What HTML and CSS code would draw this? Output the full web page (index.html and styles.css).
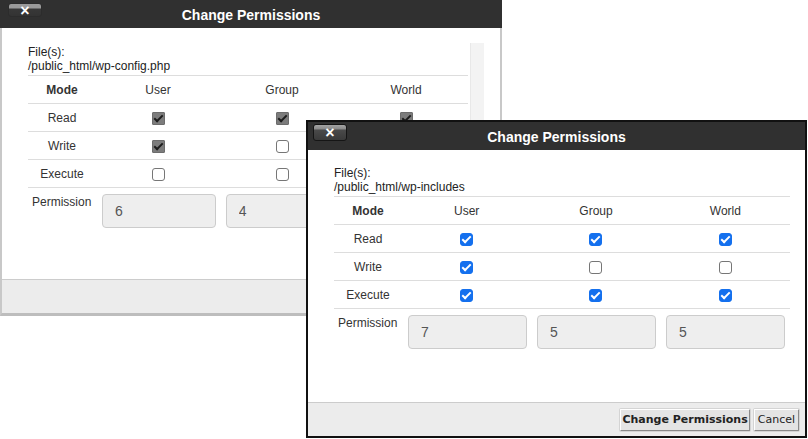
FILE: index.html
```html
<!DOCTYPE html>
<html lang="en">
<head>
  <meta charset="UTF-8">
  <title>Change Permissions</title>
  <link rel="stylesheet" href="styles.css">
</head>
<body>
  <div class="desktop">
    <!-- Background dialog (inactive, its buttons hidden under the front one) -->
    <div class="dialog inactive win-back">
      <div class="titlebar">
        <button class="close-btn">&times;</button>
        <span class="title">Change Permissions</span>
      </div>
      <div class="dialog-body">
        <div class="scroll-area">
          <div class="files">File(s):<br>/public_html/wp-config.php</div>
          <table class="perm-table">
            <colgroup><col class="col-mode"><col><col><col></colgroup>
            <tr><th>Mode</th><td>User</td><td>Group</td><td>World</td></tr>
            <tr><td>Read</td><td><input class="cb" type="checkbox" checked></td><td><input class="cb" type="checkbox" checked></td><td><input class="cb" type="checkbox" checked></td></tr>
            <tr><td>Write</td><td><input class="cb" type="checkbox" checked></td><td><input class="cb" type="checkbox"></td><td><input class="cb" type="checkbox"></td></tr>
            <tr><td>Execute</td><td><input class="cb" type="checkbox"></td><td><input class="cb" type="checkbox"></td><td><input class="cb" type="checkbox"></td></tr>
          </table>
          <div class="perm-row">
            <span class="perm-label">Permission</span>
            <input class="perm-input" value="6" readonly>
            <input class="perm-input" value="4" readonly>
            <input class="perm-input" value="4" readonly>
          </div>
        </div>
        <div class="scrollbar"></div>
      </div>
      <div class="dialog-footer"></div>
    </div>

    <!-- Front dialog (active) -->
    <div class="dialog win-front">
      <div class="titlebar">
        <button class="close-btn">&times;</button>
        <span class="title">Change Permissions</span>
      </div>
      <div class="dialog-body">
        <div class="scroll-area">
          <div class="files">File(s):<br>/public_html/wp-includes</div>
          <table class="perm-table">
            <colgroup><col class="col-mode"><col><col><col></colgroup>
            <tr><th>Mode</th><td>User</td><td>Group</td><td>World</td></tr>
            <tr><td>Read</td><td><input class="cb" type="checkbox" checked></td><td><input class="cb" type="checkbox" checked></td><td><input class="cb" type="checkbox" checked></td></tr>
            <tr><td>Write</td><td><input class="cb" type="checkbox" checked></td><td><input class="cb" type="checkbox"></td><td><input class="cb" type="checkbox"></td></tr>
            <tr><td>Execute</td><td><input class="cb" type="checkbox" checked></td><td><input class="cb" type="checkbox" checked></td><td><input class="cb" type="checkbox" checked></td></tr>
          </table>
          <div class="perm-row">
            <span class="perm-label">Permission</span>
            <input class="perm-input" value="7" readonly>
            <input class="perm-input" value="5" readonly>
            <input class="perm-input" value="5" readonly>
          </div>
        </div>
      </div>
      <div class="dialog-footer">
        <button class="btn btn-primary">Change Permissions</button>
        <button class="btn">Cancel</button>
      </div>
    </div>
  </div>
</body>
</html>
```

FILE: styles.css
```css
body {
  margin: 0;
  background: #fff;
  font-family: "Liberation Sans", Arial, sans-serif;
  font-size: 12px;
  color: #222;
}
.desktop {
  position: relative;
  width: 808px;
  height: 439px;
  overflow: hidden;
}

/* windows */
.dialog {
  position: absolute;
  box-sizing: border-box;
  display: flex;
  flex-direction: column;
  background: #fff;
  border: 2px solid #111;
}
.win-back {
  left: 0;
  top: 0;
  width: 502px;
  height: 316px;
  border-color: #c8c8c8;
  border-top: none;
  border-bottom-width: 3px;
  border-bottom-color: #bdbdbd;
}
.win-front {
  left: 306px;
  top: 120px;
  width: 501px;
  height: 318px;
}

/* title bar */
.titlebar {
  display: grid;
  grid-template-columns: 1fr auto 1fr;
  height: 28px;
  padding: 0 5px;
  background: #303030;
  color: #fff;
}
.inactive .titlebar {
  margin: 0 -2px;
  padding: 0 8px;
}
.title {
  grid-column: 2;
  grid-row: 1;
  font-size: 14px;
  font-weight: bold;
  line-height: 30px;
}
.close-btn {
  grid-column: 1;
  grid-row: 1;
  justify-self: start;
  width: 34px;
  height: 17px;
  margin-top: 2px;
  padding: 0;
  border: 1px solid #151515;
  border-radius: 3px;
  background: linear-gradient(#a4a4a4 0, #8a8a8a 4px, #4a4a4a 5px, #3a3a3a 100%);
  color: #fff;
  font-family: "Liberation Sans", Arial, sans-serif;
  font-size: 16px;
  font-weight: bold;
  line-height: 11px;
  cursor: pointer;
}
.inactive .close-btn {
  height: 14px;
  margin-top: 3px;
  border-color: #2c2c2c;
  background: linear-gradient(#9a9a9a 0, #9a9a9a 4px, #383838 5px, #333 100%);
}

/* body */
.dialog-body {
  flex: 1;
  display: flex;
  padding: 16px 15px 0 26px;
}
.inactive .dialog-body {
  padding: 15px 16px 0 26px;
  gap: 2px;
}
.scroll-area {
  flex: 1;
  min-width: 0;
}
.inactive .scroll-area {
  padding-top: 2px;
}
.scrollbar {
  width: 13px;
  background: #f3f3f3;
  border-left: 1px solid #e8e8e8;
}
.files {
  line-height: 14px;
  margin-bottom: 2px;
}

.perm-table {
  width: 100%;
  table-layout: fixed;
  border-collapse: collapse;
  border-top: 1px solid #ddd;
  color: #333;
}
.col-mode {
  width: 68px;
}
.perm-table tr {
  height: 28px;
  border-bottom: 1px solid #ddd;
}
.perm-table th,
.perm-table td {
  padding: 0;
  text-align: center;
  vertical-align: middle;
  font-size: 12px;
}

/* checkboxes */
.cb {
  appearance: none;
  -webkit-appearance: none;
  position: relative;
  display: inline-block;
  box-sizing: border-box;
  width: 13px;
  height: 13px;
  margin: 1px 0 0;
  border: 1px solid #767676;
  border-radius: 3px;
  background: #fff;
  vertical-align: middle;
}
.cb:checked {
  background: #1470ee;
  border-color: #1470ee;
}
.cb:checked::after {
  content: "";
  position: absolute;
  left: 3px;
  top: 0px;
  width: 3px;
  height: 7px;
  border: solid #fff;
  border-width: 0 2px 2px 0;
  transform: rotate(45deg);
}
.inactive .cb:checked {
  background: #7c7c7c;
  border-color: #6c6c6c;
  border-radius: 1px;
}
.inactive .cb:checked::after {
  border-color: #1c1c1c;
}

/* permission values */
.perm-row {
  display: grid;
  grid-template-columns: 64px repeat(3, 1fr);
  column-gap: 10px;
  padding: 6px 5px 0 0;
}
.perm-label {
  padding: 1px 0 0 4px;
  color: #333;
}
.perm-input {
  width: 100%;
  min-width: 0;
  height: 34px;
  box-sizing: border-box;
  padding: 0 12px;
  border: 1px solid #ccc;
  border-radius: 4px;
  background: #eee;
  color: #555;
  font-family: "Liberation Sans", Arial, sans-serif;
  font-size: 14px;
}

/* footer */
.dialog-footer {
  height: 34px;
  box-sizing: border-box;
  display: flex;
  justify-content: flex-end;
  align-items: center;
  gap: 4px;
  padding: 0 6px 0 0;
  background: #ececec;
  border-top: 1px solid #ccc;
}
.btn {
  height: 22px;
  padding: 0 3px;
  border: 1px solid;
  border-color: #fff #8a8a8a #8a8a8a #fff;
  border-radius: 1px;
  background: #e4e4e4;
  box-shadow: 0 0 0 1px #d4d4d4;
  color: #222;
  font-family: "DejaVu Sans", Verdana, sans-serif;
  font-size: 11px;
  cursor: pointer;
}
.btn-primary {
  padding: 0 1px;
  font-weight: bold;
}
```
